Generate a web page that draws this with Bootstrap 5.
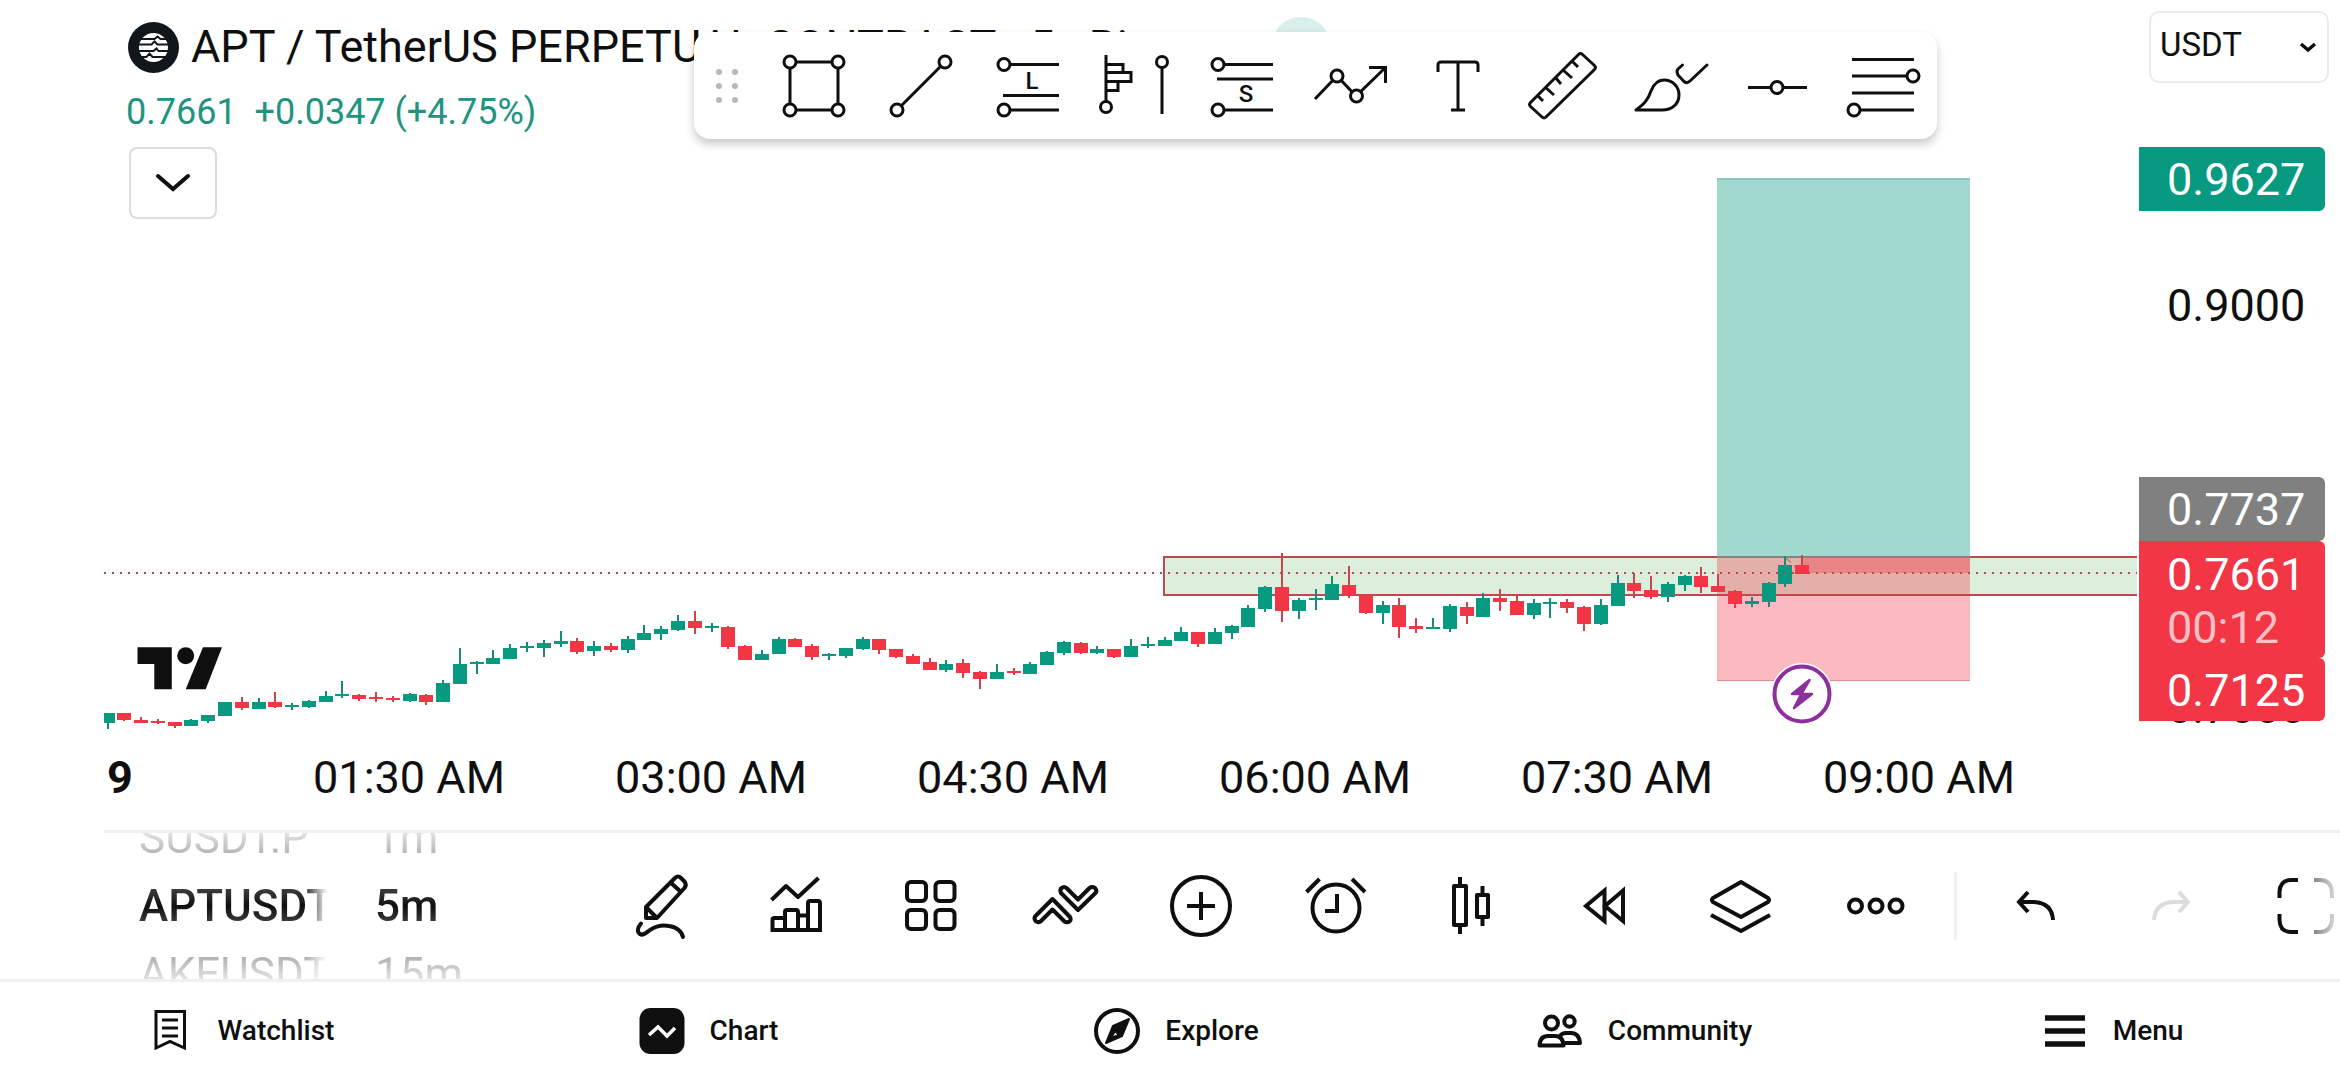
<!DOCTYPE html>
<html lang="en">
<head>
<meta charset="utf-8">
<meta name="viewport" content="width=device-width, initial-scale=1">
<title>APT / TetherUS chart</title>
<link href="https://cdn.jsdelivr.net/npm/bootstrap@5.3.0/dist/css/bootstrap.min.css" rel="stylesheet">
<style>
  :root { --ink: #0f0f0f; --up: #089981; --down: #f23645; --rule: #f0f0f0; }
  body { font-family: Roboto, "Liberation Sans", sans-serif; color: var(--ink); background: #fff; overflow-x: hidden; }
  svg { display: block; flex-shrink: 0; }
  .ico { fill: none; stroke: var(--ink); stroke-width: 4; }
  .gutter { padding-left: 104px; }
  .plain-btn { border: 0; background: none; padding: 0; display: flex; align-items: center; justify-content: center; flex: 0 0 auto; }

  .legend-box { top: 20px; left: 128px; }
  .legend-head { height: 54px; }
  .legend-title { font-size: 45px; line-height: 54px; white-space: nowrap; margin: 0; font-weight: 400; }
  .legend-values { font-size: 36px; line-height: 42px; color: #22937f; margin-top: 17px; margin-left: -2px; white-space: pre; }
  .status-dot { width: 60px; height: 60px; background: #d9efeb; border-radius: 50%; margin-left: 22px; }
  .collapse-btn { width: 88px; height: 72px; border: 2px solid #dcdcdc; border-radius: 8px; margin-top: 14px; margin-left: 1px; background: #fff; }

  .float-tools { top: 32px; left: 694px; height: 107px; border-radius: 16px; background: #fff; box-shadow: 0 5px 10px rgba(0,0,0,.22); z-index: 3; }
  .float-tools .plain-btn { width: 107px; height: 107px; }
  .float-tools .ico { stroke-width: 3; }
  .float-tools circle { fill: #fff; }
  .float-tools text { fill: var(--ink); stroke: none; font: 500 24px Roboto, sans-serif; text-anchor: middle; }
  .grip { width: 66px; }

  .time-axis { display: grid; grid-template-columns: 154fr repeat(6, 302fr) 67fr; height: 96px; padding-bottom: 8px; align-items: center; font-size: 45px; line-height: 52px; white-space: nowrap; text-align: center; }
  .time-axis .day { text-align: left; padding-left: 3px; font-weight: 700; }

  .price-axis { width: 203px; padding: 11px 0 0 2px; font-size: 45px; line-height: 66px; }
  .price-axis .form-select { width: 180px; height: 72px; margin-left: 10px; padding: 0 40px 4px 9px; font-size: 33px; color: var(--ink); border: 2px solid #ebebeb; border-radius: 10px; background-color: #fff;
    background-image: url("data:image/svg+xml,%3Csvg xmlns='http://www.w3.org/2000/svg' viewBox='0 0 18 12'%3E%3Cpath d='M2 3l7 6 7-6' fill='none' stroke='%230f0f0f' stroke-width='3.4'/%3E%3C/svg%3E"); background-size: 18px 12px; background-position: right 10px center; }
  .price-tag { width: 186px; padding-left: 28px; height: 64px; border-radius: 0 6px 6px 0; color: #fff; }
  .tag-target { background: var(--up); margin-top: 64px; }
  .tag-plain { height: 64px; padding-left: 28px; margin-top: 62px; }
  .tag-entry { background: #808080; margin-top: 140px; }
  .tag-last { background: var(--down); height: 117px; padding-top: 7px; }
  .tag-last span { display: block; line-height: 53px; }
  .tag-last .countdown { color: rgba(255,255,255,.7); }
  .tag-stop { background: var(--down); height: 63px; position: relative; z-index: 1; }
  .tag-under { margin-top: -46px; padding-left: 28px; }

  .chart-bar { border-top: 3px solid var(--rule); height: 149px; margin-left: 104px; overflow: hidden; }
  .wheel { height: 146px; overflow: hidden; font-size: 44px; line-height: 68px; color: #0f0f0f; white-space: nowrap;
    -webkit-mask-image: linear-gradient(rgba(0,0,0,.15), rgba(0,0,0,.75) 35%, #000 50%, rgba(0,0,0,.75) 65%, rgba(0,0,0,.15)); mask-image: linear-gradient(rgba(0,0,0,.15), rgba(0,0,0,.75) 35%, #000 50%, rgba(0,0,0,.75) 65%, rgba(0,0,0,.15)); }
  .wheel > div { margin-top: -29px; }
  .wheel span { display: block; opacity: .8; }
  .wheel .picked { opacity: 1; font-weight: 500; }
  .wheel-symbol { width: 190px; margin-left: 35px; }
  .wheel-symbol > div { width: 190px; overflow: hidden; -webkit-mask-image: linear-gradient(to right, #000 88%, transparent 99%); mask-image: linear-gradient(to right, #000 88%, transparent 99%); }
  .wheel-interval { width: 218px; margin-left: 46px; }
  .chart-bar .plain-btn { width: 135px; height: 146px; }
  .bar-split { width: 3px; height: 68px; background: var(--rule); margin: 0 11px; flex: 0 0 auto; }

  .app-nav { border-top: 3px solid var(--rule); height: 101px; }
  .app-nav a { flex: 1 1 0; gap: 24px; padding-left: 12px; color: var(--ink); font-size: 28px; line-height: 36px; font-weight: 500; text-decoration: none; }
</style>
<script src="https://cdn.jsdelivr.net/npm/bootstrap@5.3.0/dist/js/bootstrap.bundle.min.js"></script>
</head>
<body class="d-flex flex-column min-vh-100">

<main class="flex-grow-1 d-flex flex-column">
  <section class="position-relative d-flex gutter flex-grow-1">
    <div class="flex-grow-1">
      <svg id="plot" viewBox="104 0 2033 734" width="100%" role="img" aria-label="Price chart">
        <rect x="1164" y="557" width="980" height="38" fill="#dcefdc" stroke="#c2474f" stroke-width="2"/>
        <rect x="1717" y="178" width="253" height="379" fill="#089981" fill-opacity=".38"/>
        <path d="M1717 179H1970" stroke="#6fb8ac" stroke-width="1"/>
        <rect x="1717" y="557" width="253" height="124" fill="#f23645" fill-opacity=".34"/>
        <rect x="1802" y="557" width="168" height="16" fill="#f23645" fill-opacity=".34"/>
        <path d="M1717 557H1970" stroke="#86857c" stroke-width="2"/>
        <path d="M1717 680.500H1970" stroke="#dd8f98" stroke-width="1"/>
        <path d="M1717 595H1970" stroke="#c2474f" stroke-width="2"/>
        <path d="M1785 557L1802 573" stroke="#9b8a84" stroke-width="1.500" stroke-dasharray="8 5"/>
        <g id="candles"></g>
        <path d="M104 573H2137" stroke="#b84a56" stroke-width="2" stroke-dasharray="2 6"/>
        <g fill="#0f0f0f"><path d="M137.500 647.300H171.800V689.300H154.300V664H137.500Z"/><circle cx="185.700" cy="655.700" r="8.500"/><path d="M203 647.300H222L205.700 689.300H185.700Z"/></g>
        <circle cx="1802" cy="694" r="31" fill="#fff"/>
        <circle cx="1802" cy="694" r="27.500" fill="#fff" stroke="#8e2f9e" stroke-width="4"/>
        <path d="M1809.500 680L1792 694H1812L1794 708L1801 694.500L1809.500 680Z" fill="#8e2f9e" stroke="#8e2f9e" stroke-width="2.500" stroke-linejoin="round"/>
      </svg>
      <div class="time-axis">
        <span class="day">9</span><span>01:30 AM</span><span>03:00 AM</span><span>04:30 AM</span><span>06:00 AM</span><span>07:30 AM</span><span>09:00 AM</span>
      </div>
    </div>

    <div class="price-axis flex-shrink-0">
      <select class="form-select" aria-label="Currency"><option>USDT</option></select>
      <div class="price-tag tag-target">0.9627</div>
      <div class="tag-plain">0.9000</div>
      <div class="price-tag tag-entry">0.7737</div>
      <div class="price-tag tag-last"><span>0.7661</span><span class="countdown">00:12</span></div>
      <div class="price-tag tag-stop">0.7125</div>
      <div class="tag-under">0.7000</div>
    </div>

    <div class="legend-box position-absolute">
      <div class="legend-head d-flex align-items-center">
        <svg width="51" height="51" viewBox="-25.500 -25.500 51 51" class="me-2">
          <circle r="25.500" fill="#11161b"/>
          <circle r="14.500" fill="#fff"/>
          <path d="M-15 -8.500H1L4 -11L7 -8.500H15M-15 -3H-2L1 -6L4 -3H15M-15 3.500H0L3 1L5 3.500H15M-15 9.500H-7L-4 6L-1 9.500H15" fill="none" stroke="#11161b" stroke-width="2"/>
        </svg>
        <h1 class="legend-title ms-1">APT / TetherUS PERPETUAL CONTRACT · 5 · Binance</h1>
        <span class="status-dot"></span>
      </div>
      <div class="legend-values">0.7661  +0.0347 (+4.75%)</div>
      <button class="plain-btn collapse-btn" aria-label="Expand legend"><svg width="36" height="20" viewBox="0 0 36 20"><path d="M3 3L18 16L33 3" class="ico" stroke-linecap="round"/></svg></button>
    </div>

    <div class="float-tools position-absolute d-flex align-items-center">
      <svg class="grip" height="40" viewBox="-33 -20 66 40"><g fill="#b8b8b8"><ellipse cx="-8" cy="-14" rx="3" ry="3"/><ellipse cx="8" cy="-14" rx="3" ry="3"/><ellipse cx="-8" rx="3" ry="3"/><ellipse cx="8" rx="3" ry="3"/><ellipse cx="-8" cy="14" rx="3" ry="3"/><ellipse cx="8" cy="14" rx="3" ry="3"/></g></svg>
      <button class="plain-btn" aria-label="Rectangle"><svg class="ico" width="80" height="80" viewBox="-40 -40 80 80"><path d="M-24 -24H24V24H-24Z"/><circle cx="-24" cy="-24" r="6"/><circle cx="24" cy="-24" r="6"/><circle cx="-24" cy="24" r="6"/><circle cx="24" cy="24" r="6"/></svg></button>
      <button class="plain-btn" aria-label="Trend line"><svg class="ico" width="80" height="80" viewBox="-40 -40 80 80"><path d="M-24 24L24 -24"/><circle cx="-24" cy="24" r="6"/><circle cx="24" cy="-24" r="6"/></svg></button>
      <button class="plain-btn" aria-label="Long position"><svg class="ico" width="80" height="80" viewBox="-40 -40 80 80"><path d="M-24 -21.500H31M-25 9.500H31M-24 24H31"/><circle cx="-24" cy="-21.500" r="6"/><circle cx="-24" cy="24" r="6"/><text x="4" y="3">L</text></svg></button>
      <button class="plain-btn" aria-label="Volume profile"><svg class="ico" width="80" height="80" viewBox="-40 -40 80 80"><path d="M-29 -31V16M-29 -21.500H-12V-13.500H-29M-29 -13.500H-4V-4.500H-29M-29 -4.500H-17V4.500H-29M27 -24V28"/><circle cx="-29" cy="21" r="5.500"/><circle cx="27" cy="-24" r="5.500"/></svg></button>
      <button class="plain-btn" aria-label="Short position"><svg class="ico" width="80" height="80" viewBox="-40 -40 80 80"><path d="M-24 -21.500H31M-25 -7H31M-24 24H31"/><circle cx="-24" cy="-21.500" r="6"/><circle cx="-24" cy="24" r="6"/><text x="4" y="16">S</text></svg></button>
      <button class="plain-btn" aria-label="Path"><svg class="ico" width="80" height="80" viewBox="-40 -40 80 80"><path d="M-34 13L-12 -10L7 10L36 -18M20 -18.500H36.500V-3"/><circle cx="-12" cy="-10" r="6"/><circle cx="7.500" cy="10" r="6"/></svg></button>
      <button class="plain-btn" aria-label="Text"><svg class="ico" width="80" height="80" viewBox="-40 -40 80 80"><path d="M-18 -14V-21Q-18 -24 -15 -24H19Q22 -24 22 -21V-14M2 -24V24M-5 24H9"/></svg></button>
      <button class="plain-btn" aria-label="Measure"><svg class="ico" width="80" height="80" viewBox="-40 -40 80 80"><path stroke-linejoin="round" d="M15.500 -31.500Q17.500 -33.500 19.500 -31.500L31.500 -20.500Q33.500 -18.500 31.500 -16.500L-17 31Q-19 33 -21 31L-32.500 20.500Q-34.500 18.500 -32.500 16.500ZM9 -25L15 -19M0 -16L9 -8M-8 -9L-2 -2M-18 1L-9 9M-26 9L-20 15"/></svg></button>
      <button class="plain-btn" aria-label="Brush"><svg class="ico" width="80" height="80" viewBox="-40 -40 80 80"><path stroke-linejoin="round" stroke-linecap="round" d="M-34 24C-26 18 -22 14 -19 5C-16 -3 -12 -6 -6 -6C3 -6 9 1 9 9C9 18 2 24 -8 24ZM12.500 -21L8 -17Q6 -15 8 -11L14 -4.500Q17 -2 20 -5L37 -21"/></svg></button>
      <button class="plain-btn" aria-label="Horizontal line"><svg class="ico" width="80" height="80" viewBox="-40 -40 80 80"><path d="M-29 1.500H30"/><circle cy="1.500" r="6"/></svg></button>
      <button class="plain-btn" aria-label="Fib retracement"><svg class="ico" width="80" height="80" viewBox="-40 -40 80 80"><path d="M-32 -26.500H30M-32 -10H30M-32 7H30M-32 24H30"/><circle cx="29" cy="-10" r="6"/><circle cx="-30" cy="24" r="6"/></svg></button>
    </div>
  </section>

  <section class="chart-bar d-flex align-items-center">
    <div class="wheel wheel-symbol flex-shrink-0"><div><span>SUSDT.P</span><span class="picked">APTUSDT.P</span><span>AKEUSDT.P</span></div></div>
    <div class="wheel wheel-interval flex-shrink-0"><div><span>1m</span><span class="picked">5m</span><span>15m</span></div></div>
    <button class="plain-btn" aria-label="Draw"><svg class="ico" width="72" height="72" viewBox="-36 -36 72 72"><path stroke-linejoin="round" d="M-15 12V1L14 -28Q17 -31 20 -28L23.500 -24.500Q26 -21.500 23.500 -18L-4 12ZM-15 1L-4 12M9 -24L20 -14"/><path stroke-linecap="round" d="M-20 17.500C-24 22 -24 26 -21 28C-18 30 -15 27 -11 24C-5 20 2 19 8 20C16 21 21 26 22 31"/></svg></button>
    <button class="plain-btn" aria-label="Indicators"><svg class="ico" width="72" height="72" viewBox="-36 -36 72 72"><path stroke-linejoin="round" d="M-24.500 -6L-10 -20L2 -9L22.500 -28M-23.500 24V14Q-23.500 12 -21.500 12H-11M-11 24V6Q-11 4 -9 4H0Q2 4 2 6V24M2 9.500H12M12 24V-3Q12 -5 14 -5H22Q24 -5 24 -3V24ZM-25.500 24H26"/></svg></button>
    <button class="plain-btn" aria-label="Layouts"><svg class="ico" width="72" height="72" viewBox="-36 -36 72 72"><rect x="-24" y="-24" width="19" height="19" rx="4"/><rect x="4.500" y="-24" width="19" height="19" rx="4"/><rect x="-24" y="4" width="19" height="19" rx="4"/><rect x="4.500" y="4" width="19" height="19" rx="4"/></svg></button>
    <button class="plain-btn" aria-label="Strategies"><svg class="ico" width="72" height="72" viewBox="-36 -36 72 72"><path stroke-linejoin="round" d="M-13.500 -7L4 11Q5.500 14 3.500 15.500Q1 17 -1.500 15.500L-13.500 3.500L-25.500 15.500Q-28 17 -30.500 15Q-32.500 12 -30.500 10ZM12 4L-5 -13Q-6.500 -16 -4.500 -18Q-2 -20 .5 -18L12 -6.500L23.500 -18Q26 -20 29 -18Q31.500 -15 29.500 -13Z"/></svg></button>
    <button class="plain-btn" aria-label="Add"><svg class="ico" width="72" height="72" viewBox="-36 -36 72 72"><circle r="29"/><path d="M-14 0H14M0 -14V14"/></svg></button>
    <button class="plain-btn" aria-label="Alerts"><svg class="ico" width="72" height="72" viewBox="-36 -36 72 72"><circle cy="2" r="23.500"/><path d="M1 -12V5H-11M-29.500 -14L-16.500 -27M16 -27L29 -14"/></svg></button>
    <button class="plain-btn" aria-label="Chart type"><svg class="ico" width="72" height="72" viewBox="-36 -36 72 72"><path stroke-linejoin="round" d="M-17 -20H-5V19H-17ZM-11 -29V-20M-11 19V28M6 -11H17V11H6ZM11.500 -20V-11M11.500 11V20"/></svg></button>
    <button class="plain-btn" aria-label="Replay"><svg class="ico" width="72" height="72" viewBox="-36 -36 72 72"><path d="M-1.500 -15.500V15L-20 0ZM17 -15.500V15L-1 0Z"/></svg></button>
    <button class="plain-btn" aria-label="Object tree"><svg class="ico" width="72" height="72" viewBox="-36 -36 72 72"><path stroke-linejoin="round" d="M0 -24L27 -8Q29 -6 27 -4L0 11L-28 -4Q-30 -6 -28 -8ZM-30 9L0 25L29 9"/></svg></button>
    <button class="plain-btn" aria-label="More"><svg class="ico" width="72" height="72" viewBox="-36 -36 72 72"><circle cx="-20.500" r="6.500"/><circle r="6.500"/><circle cx="20" r="6.500"/></svg></button>
    <div class="bar-split"></div>
    <button class="plain-btn" aria-label="Undo"><svg class="ico" width="72" height="72" viewBox="-36 -36 72 72"><path d="M-8 -14L-17 -4L-8 6M-17 -4H-2Q16 -3 17 14"/></svg></button>
    <button class="plain-btn" aria-label="Redo" disabled><svg class="ico" width="72" height="72" viewBox="-36 -36 72 72"><path style="stroke:#dcdcdc" d="M8 -14L17 -4L8 6M17 -4H2Q-16 -3 -17 14"/></svg></button>
    <button class="plain-btn" aria-label="Full screen"><svg class="ico" width="72" height="72" viewBox="-36 -36 72 72"><defs><linearGradient id="fade" gradientUnits="userSpaceOnUse" x1="4" x2="28" y1="0" y2="0"><stop stop-color="#777"/><stop offset="1" stop-color="#d4d4d4"/></linearGradient></defs><path d="M-26.500 -8V-14Q-26 -26 -15 -26H-8M-26.500 8V14Q-26 26 -15 26H-8"/><path style="stroke:url(#fade)" d="M8 -26H14Q25 -26 26 -14V-8M8 26H14Q25 26 26 14V8"/></svg></button>
  </section>
</main>

<nav class="app-nav d-flex align-items-stretch">
  <a href="#" class="d-flex align-items-center justify-content-center"><svg class="ico" width="48" height="48" viewBox="-24 -24 48 48" style="stroke-width:3"><path d="M-14 -19.500H14.500V17L0 10.500L-14 17ZM-8 -11H8M-8 -3H8M-8 5H8"/></svg>Watchlist</a>
  <a href="#" class="d-flex align-items-center justify-content-center"><svg width="48" height="48" viewBox="-24 -24 48 48"><rect x="-22.500" y="-23" width="45" height="46" rx="11" fill="#0f0f0f"/><path d="M-13 4L-4 -4L5 5L13 -3" fill="none" stroke="#fff" stroke-width="3.500"/></svg>Chart</a>
  <a href="#" class="d-flex align-items-center justify-content-center"><svg class="ico" width="48" height="48" viewBox="-24 -24 48 48"><circle r="21"/><path fill="#0f0f0f" fill-rule="evenodd" stroke-width="2" stroke-linejoin="round" d="M12 -12L-4 -5L-11 12L5 5ZM-2 0L2 4L-6 7Z"/></svg>Explore</a>
  <a href="#" class="d-flex align-items-center justify-content-center"><svg class="ico" width="48" height="48" viewBox="-24 -24 48 48"><ellipse cx="-8.500" cy="-8" rx="6.500" ry="6.500"/><circle cx="9.500" cy="-9.500" r="5.200"/><path stroke-linejoin="round" d="M-20.500 14.500Q-20 5 -12 5H-5Q3 5 3.500 14.500ZM0 5Q2 2 6 2H11Q19 2 20 12H4"/></svg>Community</a>
  <a href="#" class="d-flex align-items-center justify-content-center"><svg width="48" height="48" viewBox="-24 -24 48 48"><path d="M-20 -13H20M-20 0H20M-20 13H20" stroke="#0f0f0f" stroke-width="5.500"/></svg>Menu</a>
</nav>

<script>
  // Each bar: direction, high, body top, body bottom, low (plot units)
  const bars = `u 713 713 723 729|d 713 713 720 721|d 717 720 723 723|d 719 721 723 724|d 722 722 726 728|u 719 720 726 726|u 715 715 721 723|u 702 702 716 716|d 697 702 708 710|u 698 702 709 709|d 692 702 707 708|u 703 705 707 710|u 700 701 707 708|u 691 696 702 702|u 681 694 696 698|d 694 695 699 701|d 692 697 699 702|d 696 698 700 702|u 693 694 701 702|d 694 695 702 705|u 680 683 702 702|u 648 664 684 684|u 661 662 664 674|u 650 658 664 664|u 644 648 659 659|u 642 646 648 652|u 640 643 648 657|u 631 641 644 647|d 638 641 652 654|u 641 646 651 656|d 643 646 650 652|u 636 639 650 653|u 625 633 640 640|u 626 629 634 640|u 615 621 630 631|d 611 621 628 634|u 623 626 628 632|d 626 627 647 649|d 645 646 660 660|u 650 654 660 660|u 637 639 654 654|d 638 639 647 647|d 644 646 657 660|u 653 654 656 660|u 648 648 656 658|u 637 639 649 650|d 639 639 650 654|d 649 649 657 658|d 654 656 664 664|d 658 662 670 670|u 660 664 670 672|d 659 663 673 678|d 671 672 679 689|u 664 672 679 679|d 668 671 673 675|u 662 664 674 674|u 651 652 665 665|u 641 642 653 655|d 642 643 653 654|u 646 649 653 654|d 649 649 657 658|u 639 646 657 657|u 637 644 646 648|u 637 640 646 646|u 627 632 641 641|d 632 632 644 647|u 628 632 644 644|u 625 626 633 639|u 605 608 627 627|u 586 587 609 612|d 553 587 611 622|u 598 600 611 619|u 589 598 600 610|u 576 584 600 600|d 566 585 595 598|d 595 595 613 614|u 601 605 613 624|d 598 605 627 638|d 618 626 629 633|u 618 627 629 629|u 604 606 629 632|d 602 607 616 624|u 593 598 617 617|d 589 598 602 611|d 596 601 615 615|u 599 603 615 619|u 598 602 604 618|d 599 602 608 613|d 606 607 624 631|u 599 605 624 625|u 575 583 606 606|d 573 583 591 598|d 576 590 597 599|u 582 584 597 602|u 575 576 585 591|d 567 576 587 593|d 574 586 592 592|d 590 591 604 608|u 597 601 604 607|u 582 583 602 607|u 556 565 584 587|d 555 565 574 574`;
  const step = 302 / 18;
  document.getElementById('candles').innerHTML = bars.split('|').map((b, i) => {
    const [dir, h, t, bt, l] = b.split(' ');
    const x = Math.round(107.5 + i * step);
    const c = dir === 'u' ? '#089981' : '#f23645';
    const w = dir === 'u' ? '#138c79' : '#cf424e';
    return `<rect x="${x - 1}" y="${h}" width="2" height="${l - h}" fill="${w}"/><rect x="${x - 7}" y="${t}" width="14" height="${bt - t}" fill="${c}"/>`;
  }).join('');
</script>
</body>
</html>
